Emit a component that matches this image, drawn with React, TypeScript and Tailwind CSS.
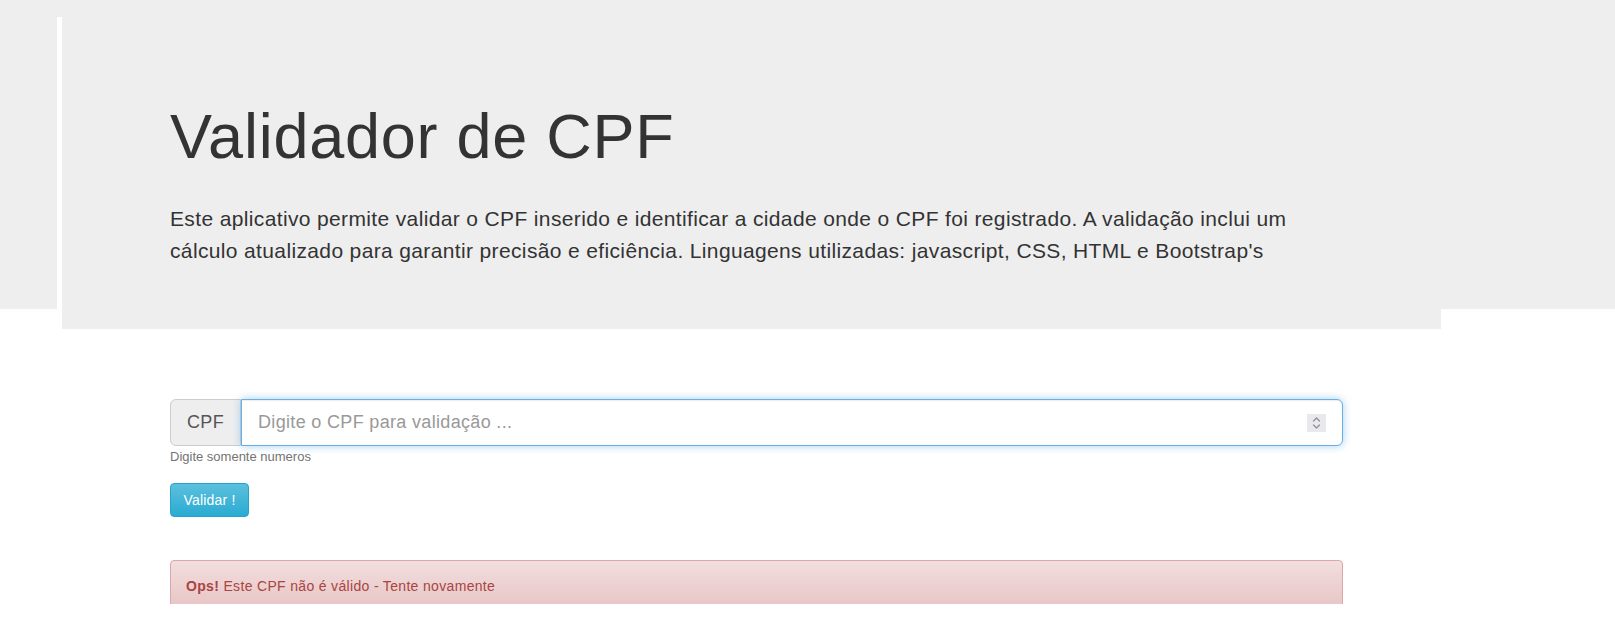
import React from "react";

export default function App() {
  return (
    <div className="min-h-[621px] bg-white font-['Liberation_Sans',Arial,sans-serif] text-[#333]">
      <div className="h-[309px] bg-[#eeeeee] pt-[17px] pl-[57px]">
        <div className="w-[1384px] h-[312px] border-l-[5px] border-white bg-[#eeeeee] pl-[108px] pt-[85px]">
          <h1 className="text-[63px] leading-[1.1] font-normal tracking-[0.75px] text-[#333]">Validador de CPF</h1>
          <p className="mt-[32px] w-[1173px] text-[21px] leading-[1.5] font-light tracking-[0.36px] text-[#333]">
            Este aplicativo permite validar o CPF inserido e identificar a cidade onde o CPF foi registrado. A validação inclui um cálculo atualizado para garantir precisão e eficiência. Linguagens utilizadas: javascript, CSS, HTML e Bootstrap's
          </p>
        </div>
      </div>

      <div className="mt-[90px] pl-[170px]">
        <div className="flex h-[47px] w-[1173px]">
          <div className="flex w-[71px] items-center justify-center rounded-l-[6px] border border-[#cccccc] bg-[#eeeeee] text-[18px] tracking-[0.3px] text-[#555]">
            CPF
          </div>
          <div className="flex flex-1 items-center rounded-r-[6px] border border-[#66afe9] bg-white pl-[16px] pr-[16px] shadow-[inset_0_1px_1px_rgba(0,0,0,0.075),0_0_8px_rgba(102,175,233,0.6)]">
            <span className="flex-1 text-[18px] tracking-[0.33px] text-[#999]">Digite o CPF para validação ...</span>
            <div className="flex h-[18px] w-[19px] items-center justify-center bg-[#e9e9ed]">
              <svg width="11" height="14" viewBox="0 0 11 14" fill="none" stroke="#8f8f9d" strokeWidth="1.3" strokeLinecap="round" strokeLinejoin="round">
                <path d="M2.5 5 L5.5 2 L8.5 5" />
                <path d="M2.5 9 L5.5 12 L8.5 9" />
              </svg>
            </div>
          </div>
        </div>
        <div className="mt-[2px] text-[13px] leading-[18px] text-[#737373]">Digite somente numeros</div>
        <button className="mt-[17px] flex h-[34px] w-[79px] items-center justify-center rounded-[4px] border border-[#28a4c9] bg-[linear-gradient(to_bottom,#5bc0de_0%,#2aabd2_100%)] text-[14px] tracking-[0.2px] text-white">
          Validar !
        </button>
        <div className="mt-[43px] h-[44px] w-[1173px] overflow-hidden">
          <div className="h-[52px] rounded-[4px] border border-[#dca7a7] bg-[linear-gradient(to_bottom,#f2dede_0%,#e7c3c3_100%)] px-[15px] py-[15px] text-[14px] leading-[20px] tracking-[0.33px] text-[#a94442]">
            <b className="font-bold">Ops!</b> Este CPF não é válido - Tente novamente
          </div>
        </div>
      </div>
    </div>
  );
}
